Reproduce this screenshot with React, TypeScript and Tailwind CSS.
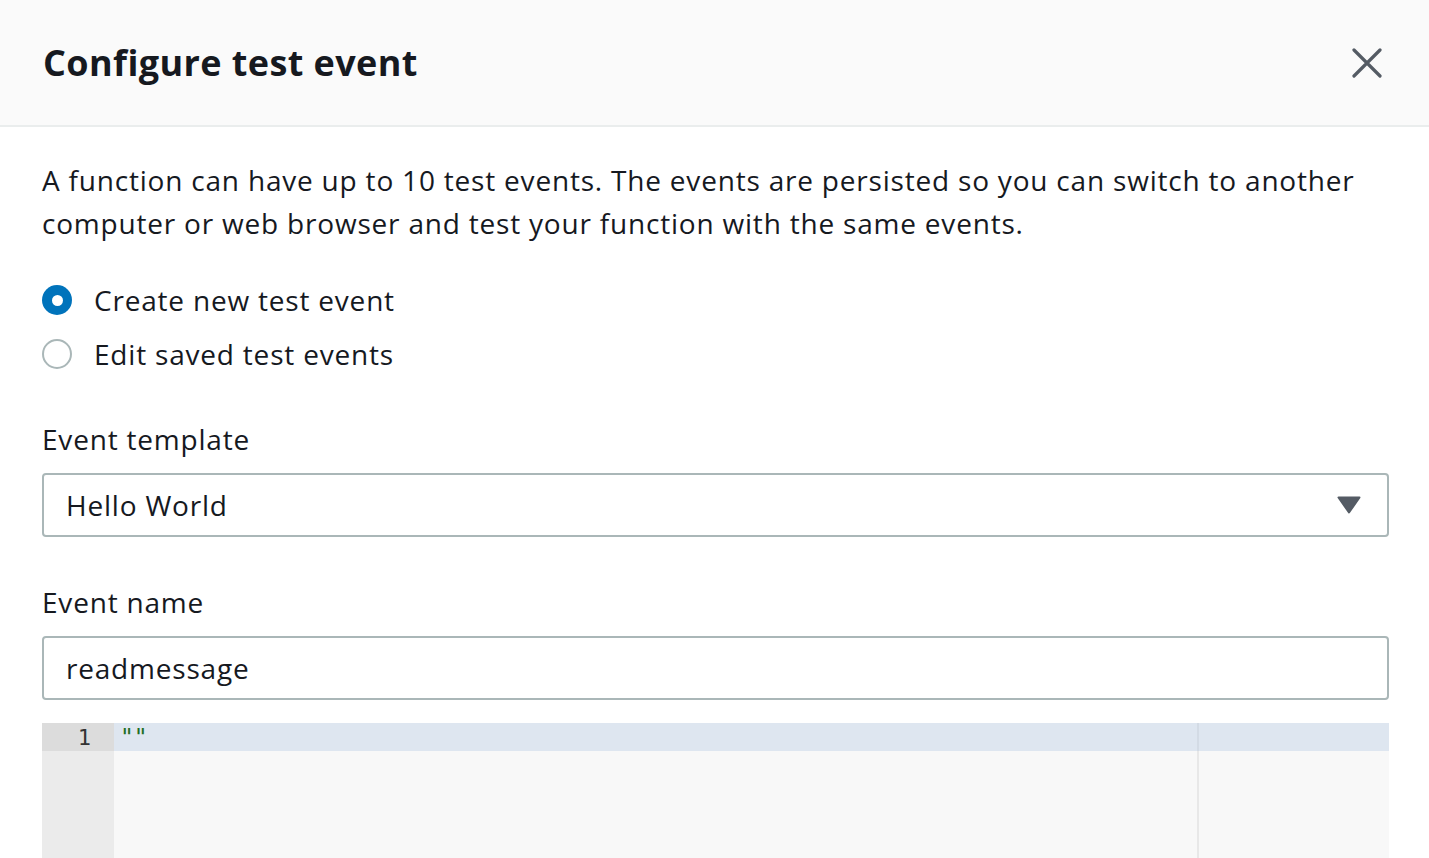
export default function App() {
  const font = { fontFamily: '"Open Sans", "Noto Sans", Arial, sans-serif' };
  return (
    <div className="w-[1429px] h-[858px] overflow-hidden bg-white text-[#16191f]" style={font}>
      <div className="h-[127px] bg-[#fafafa] border-b-2 border-[#eaeded] flex items-center justify-between pl-[43px] pr-[47px]">
        <h1 className="text-[36px] font-bold leading-[44px] tracking-[0.4px]">Configure test event</h1>
        <svg width="30" height="30" viewBox="0 0 30 30" className="shrink-0">
          <path d="M2 2 L28 28 M28 2 L2 28" stroke="#545b64" strokeWidth="3.2" strokeLinecap="round" />
        </svg>
      </div>
      <div className="pl-[42px] pr-[40px] pt-[32px] tracking-[0.8px]">
        <p className="text-[28px] leading-[43px]">
          A function can have up to 10 test events. The events are persisted so you can switch to another computer or web browser and test your function with the same events.
        </p>
        <div className="mt-[33px] flex flex-col gap-[10px]">
          <div className="flex items-center h-[44px]">
            <span className="w-[30px] h-[30px] rounded-full bg-[#0073bb] flex items-center justify-center">
              <span className="w-[11px] h-[11px] rounded-full bg-white" />
            </span>
            <span className="ml-[22px] text-[28px] leading-[44px]">Create new test event</span>
          </div>
          <div className="flex items-center h-[44px]">
            <span className="w-[30px] h-[30px] rounded-full border-2 border-[#aab7b8] bg-white" />
            <span className="ml-[22px] text-[28px] leading-[44px]">Edit saved test events</span>
          </div>
        </div>
        <div className="mt-[41px] text-[28px] leading-[44px]">Event template</div>
        <div className="mt-[12px] h-[64px] border-2 border-[#aab7b8] rounded-[4px] flex items-center justify-between pl-[22px] pr-[26px]">
          <span className="text-[28px] leading-[44px]">Hello World</span>
          <svg width="24" height="18" viewBox="0 0 24 18">
            <path d="M1.5 1.5 L22.5 1.5 L12 16.5 Z" fill="#545b64" stroke="#545b64" strokeWidth="2" strokeLinejoin="round" />
          </svg>
        </div>
        <div className="mt-[43px] text-[28px] leading-[44px]">Event name</div>
        <div className="mt-[12px] h-[64px] border-2 border-[#aab7b8] rounded-[4px] flex items-center pl-[22px]">
          <span className="text-[28px] leading-[44px]">readmessage</span>
        </div>
        <div className="mt-[23px] h-[200px] flex bg-[#f8f8f8] tracking-normal" style={{ fontFamily: '"DejaVu Sans Mono", "Liberation Mono", monospace' }}>
          <div className="w-[72px] bg-[#ebebeb] flex flex-col">
            <div className="h-[28px] bg-[#dcdcdc] text-right pr-[23px] text-[22px] leading-[30px] text-[#333]">1</div>
          </div>
          <div className="flex-1 flex flex-col">
            <div className="h-[28px] bg-[#dee6f0] flex">
              <div className="w-[1085px] pl-[6px] text-[23px] leading-[28px] text-[#236e24] border-r-2 border-[#d3dbe5]">""</div>
            </div>
            <div className="flex flex-1">
              <div className="w-[1085px] border-r-2 border-[#e8e8e8]" />
            </div>
          </div>
        </div>
      </div>
    </div>
  );
}
